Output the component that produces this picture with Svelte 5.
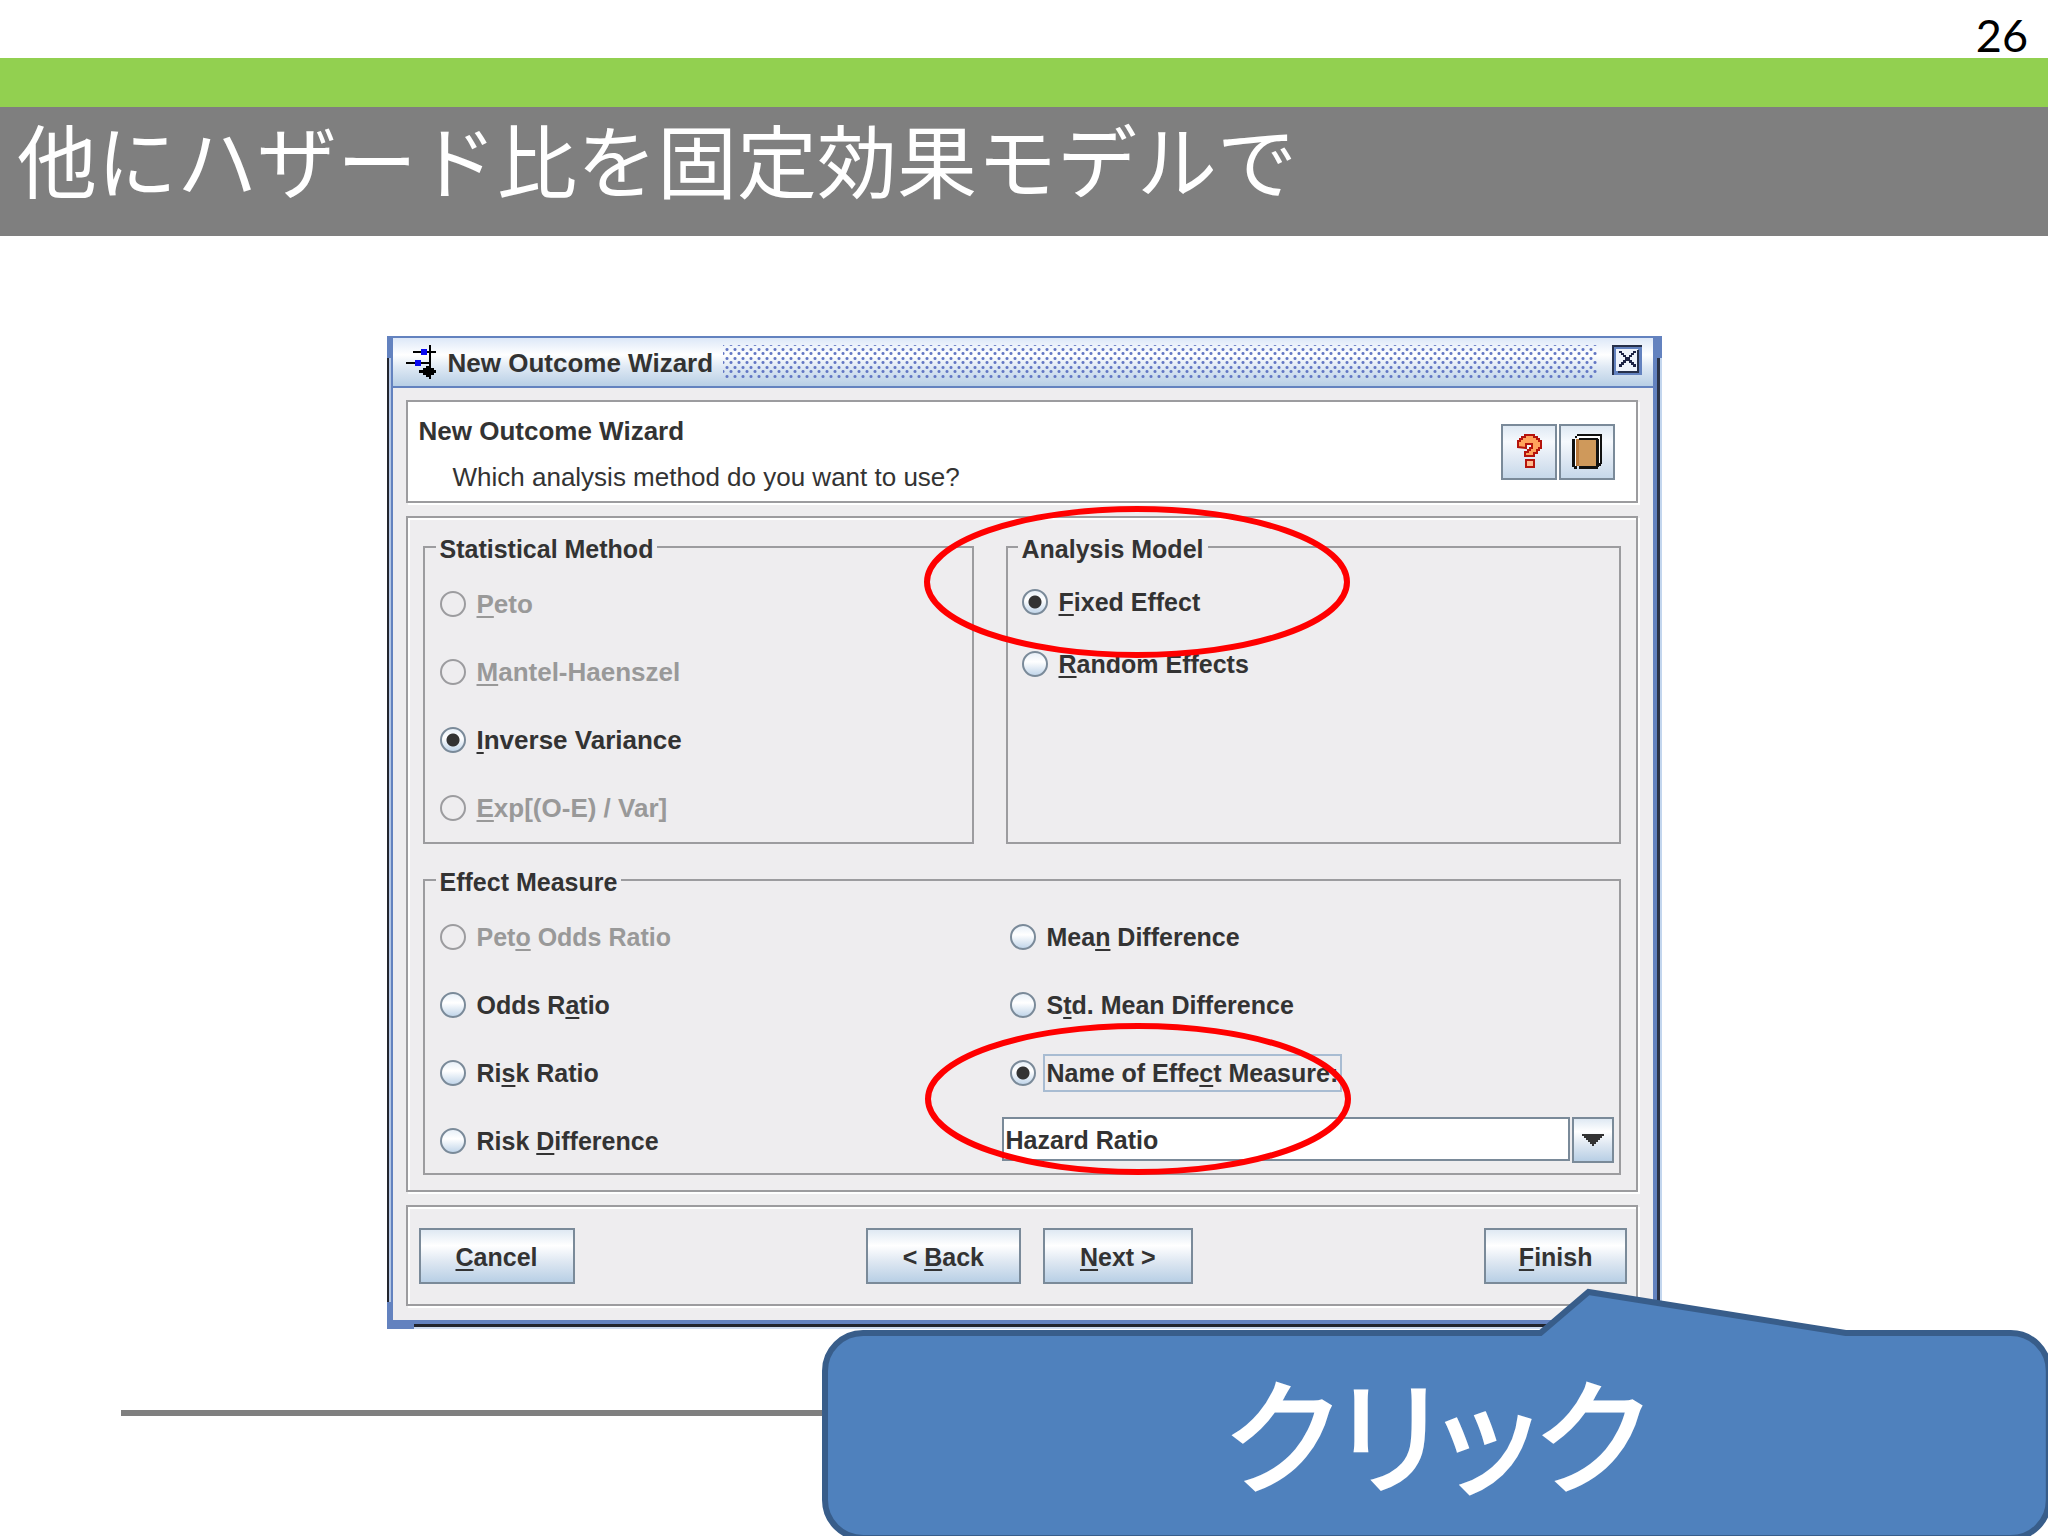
<script>
  // Each label is split around its keyboard mnemonic: [before, mnemonic, after].
  const methods = [
    { id: 'peto', label: ['', 'P', 'eto'], disabled: true },
    { id: 'mh', label: ['', 'M', 'antel-Haenszel'], disabled: true },
    { id: 'iv', label: ['', 'I', 'nverse Variance'] },
    { id: 'exp', label: ['', 'E', 'xp[(O-E) / Var]'], disabled: true }
  ];
  const models = [
    { id: 'fixed', label: ['', 'F', 'ixed Effect'] },
    { id: 'random', label: ['', 'R', 'andom Effects'] }
  ];
  const ratioMeasures = [
    { id: 'peto-or', label: ['Pet', 'o', ' Odds Ratio'], disabled: true },
    { id: 'or', label: ['Odds R', 'a', 'tio'] },
    { id: 'rr', label: ['Ri', 's', 'k Ratio'] },
    { id: 'rd', label: ['Risk ', 'D', 'ifference'] }
  ];
  const otherMeasures = [
    { id: 'md', label: ['Mea', 'n', ' Difference'] },
    { id: 'smd', label: ['S', 't', 'd. Mean Difference'] },
    { id: 'named', label: ['Name of Effe', 'c', 't Measure:'], focused: true }
  ];

  let method = $state('iv');
  let model = $state('fixed');
  let measure = $state('named');
  let measureName = $state('Hazard Ratio');
</script>

{#snippet caption(label)}{label[0]}<u>{label[1]}</u>{label[2]}{/snippet}

<main class="slide">
  <div class="page-number">26</div>
  <div class="accent"></div>
  <h1>他にハザード比を固定効果モデルで</h1>

  <section class="window" aria-label="New Outcome Wizard">
    <header class="titlebar">
      <svg class="app-icon" viewBox="0 0 32 34" aria-hidden="true">
        <path d="M24 0V34M7 7H30M0 18H23" fill="none" stroke="#000" stroke-width="2" />
        <path d="M15 4h6v6h-6zM9 15h6v6H9z" fill="#0808f0" />
        <path d="M13 25h4v-2h3v-2h5v2h3v2h2v3h-2v2h-3v2h-5v-2h-3v-2h-4z" fill="#000" />
      </svg>
      <span class="window-title">New Outcome Wizard</span>
      <span class="grip"></span>
      <button class="close" aria-label="Close">
        <svg viewBox="0 0 30 30" aria-hidden="true">
          <path d="M0 0h30v30H0z" fill="#6382bf" />
          <path d="M0 0h30v2H2v28H0z" fill="#26304a" />
          <path d="M4 4h22v22H4z" fill="#eef3fb" />
          <path d="M25 5h2v23H6v-2h19z" fill="#26304a" />
          <path d="M7 6h3v2h2v2h2v2h3v-2h2V8h2V6h3v2h-2v2h-2v2h-2v3h2v2h2v2h2v3h-3v-2h-2v-2h-2v-2h-3v2h-2v2h-2v2H7v-3h2v-2h2v-2h2v-3h-2v-2H9V8H7z" fill="#1c2344" />
        </svg>
      </button>
    </header>

    <div class="content">
      <div class="panel intro">
        <div class="intro-text">
          <h2>New Outcome Wizard</h2>
          <p>Which analysis method do you want to use?</p>
        </div>
        <div class="tools">
          <button class="metal tool" aria-label="Help">
            <svg viewBox="0 0 26 36" aria-hidden="true">
              <path
                d="M2 13V7h2V5h2V3h3V1h9v2h3v2h2v2h2v7h-2v2h-2v3h-3v3H9v-4h3v-2h2v-2h2v-4h-6v4z"
                fill="#ffa35c" stroke="#b5140c" stroke-width="2" />
              <path d="M10 26h8v7h-8z" fill="#ffb98c" stroke="#b5140c" stroke-width="2" />
            </svg>
          </button>
          <button class="metal tool" aria-label="Contents">
            <svg viewBox="0 0 30 36" aria-hidden="true">
              <path d="M5 1h24v29H5z" fill="#fff" />
              <path d="M2 6h23v26H2z" fill="#cf995b" />
              <path d="M2 5h2v27H2z" fill="#fff" />
              <path d="M4 5h3v27H4z" fill="#b9783a" />
              <path d="M5 0h25v30h-2V2H5z" fill="#111" />
              <path d="M3 2h2v2H3zM7 4h19v2H7zM0 5h3v28H0zM24 5h3v28h-3zM2 32h3v3H2zM7 32h19v3H7zM26 29h3v3h-3z" fill="#111" />
            </svg>
          </button>
        </div>
      </div>

      <div class="panel options">
        <div class="groups">
          <fieldset>
            <legend>Statistical Method</legend>
            <div class="rows method">
              {#each methods as m (m.id)}
                <label class="row">
                  <input type="radio" name="method" value={m.id} bind:group={method} disabled={m.disabled} />
                  <span>{@render caption(m.label)}</span>
                </label>
              {/each}
            </div>
          </fieldset>

          <fieldset class="model">
            <legend>Analysis Model</legend>
            <div class="rows">
              {#each models as m (m.id)}
                <label class="row">
                  <input type="radio" name="model" value={m.id} bind:group={model} />
                  <span>{@render caption(m.label)}</span>
                </label>
              {/each}
              <svg class="ring" viewBox="0 0 426 152" aria-hidden="true">
                <ellipse cx="213" cy="76" rx="210" ry="73" />
              </svg>
            </div>
          </fieldset>
        </div>

        <fieldset class="effect">
          <legend>Effect Measure</legend>
          <div class="measures">
            <div class="rows">
              {#each ratioMeasures as m (m.id)}
                <label class="row">
                  <input type="radio" name="measure" value={m.id} bind:group={measure} disabled={m.disabled} />
                  <span>{@render caption(m.label)}</span>
                </label>
              {/each}
            </div>
            <div class="rows other">
              {#each otherMeasures as m (m.id)}
                <label class="row">
                  <input type="radio" name="measure" value={m.id} bind:group={measure} />
                  <span class:focused={m.focused}>{@render caption(m.label)}</span>
                </label>
              {/each}
              <div class="combo">
                <input type="text" aria-label="Name of Effect Measure" bind:value={measureName} />
                <button class="metal" aria-label="Show effect measures">
                  <svg viewBox="0 0 22 12" aria-hidden="true">
                    <path d="M0 0h22v2h-2v2h-2v2h-2v2h-2v2h-2v2h-2v-2H8V8H6V6H4V4H2V2H0z" fill="#333" />
                  </svg>
                </button>
              </div>
              <svg class="ring" viewBox="0 0 426 152" aria-hidden="true">
                <ellipse cx="213" cy="76" rx="210" ry="73" />
              </svg>
            </div>
          </div>
        </fieldset>
      </div>

      <footer class="panel actions">
        <button class="metal"><span><u>C</u>ancel</span></button>
        <div class="steps">
          <button class="metal"><span>&lt; <u>B</u>ack</span></button>
          <button class="metal"><span><u>N</u>ext &gt;</span></button>
        </div>
        <button class="metal finish"><span><u>F</u>inish</span></button>
      </footer>
    </div>
  </section>

  <hr />

  <div class="callout">
    <svg viewBox="0 0 1228 250" preserveAspectRatio="none" aria-hidden="true">
      <path
        d="M44 47H721L769 6L1026 47H1191a38 38 0 0 1 38 38V214a38 38 0 0 1-38 38H44a38 38 0 0 1-38-38V85a38 38 0 0 1 38-38z"
        fill="#4f81bd" stroke="#385d8a" stroke-width="6" />
    </svg>
    <p>クリック</p>
  </div>
</main>

<style>
  :global(body) {
    margin: 0;
    background: #fff;
  }

  .slide {
    position: relative;
    box-sizing: border-box;
    min-height: 100vh;
    display: flex;
    flex-direction: column;
    overflow: hidden;
    background: #fff;
    color: #333;
    font-family: "Liberation Sans", Arial, sans-serif;
  }

  .page-number {
    height: 58px;
    box-sizing: border-box;
    padding: 5px 20px 0 0;
    text-align: right;
    color: #000;
    font: 45px/60px Lato, sans-serif;
  }

  .accent {
    height: 49px;
    background: #92d050;
  }

  h1 {
    margin: 0;
    padding: 0 17px 29px;
    background: #7f7f7f;
    color: #fff;
    font: 400 80px/100px "Noto Sans CJK JP", sans-serif;
  }

  /* Window frame: blue edges with a dark line and a light line outside it */
  .window {
    box-sizing: border-box;
    width: 100%;
    max-width: 1275px;
    margin: 100px auto 0;
    padding: 2px 9px 9px 6px;
    background:
      linear-gradient(90deg, #22252e 2px, #b4c6e4 2px) 0 22px / 4px calc(100% - 49px) no-repeat,
      linear-gradient(90deg, #2c3448 3px, #c3d6ee 3px) 100% 22px / 5px calc(100% - 22px) no-repeat,
      linear-gradient(180deg, #22252e 3px, #cfdcf0 3px) 100% 100% / calc(100% - 27px) 5px no-repeat,
      #6382bf;
  }

  .titlebar {
    display: flex;
    align-items: center;
    height: 48px;
    padding: 0 11px 0 13px;
    border-bottom: 2px solid #6382bf;
    background: linear-gradient(180deg, #dde8f8 0, #fff 35%, #dfe9f4 60%, #b8cfe5 100%);
  }

  .app-icon {
    width: 32px;
    height: 34px;
  }

  .window-title {
    margin-left: 10px;
    padding-top: 2px;
    font-size: 26px;
    line-height: 30px;
    font-weight: 700;
  }

  .grip {
    flex: 1;
    height: 34px;
    margin: 0 15px 0 10px;
    background:
      radial-gradient(circle, #6377c4 1px, transparent 2px) 0 0 / 8px 9px,
      radial-gradient(circle, #6377c4 1px, transparent 2px) 4px 4px / 8px 9px;
  }

  .close {
    width: 30px;
    height: 30px;
    margin-bottom: 4px;
    padding: 0;
    border: 0;
    background: none;
  }

  svg {
    display: block;
  }

  .content {
    display: flex;
    flex-direction: column;
    gap: 13px;
    padding: 12px 15px 14px 13px;
    background: #eeedef;
  }

  .panel,
  fieldset {
    border: 2px solid #9c9c9f;
  }

  .panel {
    box-shadow: 2px 2px 0 #fff, inset 2px 2px 0 #fff;
  }

  .intro {
    display: flex;
    align-items: center;
    justify-content: space-between;
    padding: 0 21px 0 11px;
    background: #fff;
  }

  .intro-text {
    padding: 6px 0 1px;
  }

  h2,
  .intro p {
    margin: 0;
    font-size: 26px;
    line-height: 46px;
  }

  .intro p {
    padding-left: 34px;
  }

  .tools {
    display: flex;
    gap: 2px;
  }

  .metal {
    display: flex;
    align-items: center;
    justify-content: center;
    box-sizing: border-box;
    height: 56px;
    padding: 0 35px;
    border: 2px solid #7a8a99;
    border-radius: 0;
    background: linear-gradient(180deg, #dfe9f3 0, #fff 30%, #dfe8f2 60%, #b8cfe5 100%);
    color: #333;
    font: 700 25px/30px "Liberation Sans", Arial, sans-serif;
    white-space: pre;
  }

  .metal span {
    padding-top: 2px;
  }

  .tool {
    width: 56px;
    padding: 0;
    background: linear-gradient(180deg, #dfe9f3 0, #f6f9fd 30%, #e2eaf4 60%, #c6d8ea 100%);
  }

  .tool svg {
    height: 36px;
  }

  .options {
    display: flex;
    flex-direction: column;
    gap: 22px;
    padding: 15px;
  }

  .groups {
    display: grid;
    grid-template-columns: 551fr 615fr;
    gap: 32px;
  }

  fieldset {
    min-width: 0;
    margin: 0;
    padding: 13px 6px 4px 15px;
  }

  .model {
    padding-top: 11px;
    padding-left: 14px;
  }

  .effect {
    padding-right: 5px;
    padding-bottom: 2px;
  }

  legend {
    margin-left: -4px;
    padding: 4px 4px 0;
    font-size: 25px;
    line-height: 24px;
    font-weight: 700;
  }

  .rows {
    position: relative;
    display: flex;
    flex-direction: column;
    align-items: flex-start;
    gap: 8px;
  }

  .row {
    display: flex;
    align-items: center;
    gap: 11px;
    height: 60px;
    font-size: 25px;
    line-height: 34px;
    font-weight: 700;
    white-space: pre;
  }

  .method .row {
    font-size: 26px;
  }

  .model .rows {
    gap: 2px;
  }

  u {
    text-decoration: underline 2px;
    text-underline-offset: 3px;
    text-decoration-skip-ink: none;
  }

  input[type="radio"] {
    appearance: none;
    box-sizing: border-box;
    width: 26px;
    height: 26px;
    margin: 0;
    border: 2px solid #7a8a99;
    border-radius: 50%;
    background: linear-gradient(180deg, #e8f0f8, #fff 40%, #c2d6ea);
  }

  input[type="radio"]:checked {
    background:
      radial-gradient(circle, #333 6px, transparent 7px),
      linear-gradient(180deg, #e8f0f8, #fff 40%, #c2d6ea);
  }

  input[type="radio"]:disabled {
    border-color: #9c9c9f;
    background: none;
  }

  input:disabled + span {
    color: #999;
  }

  .focused {
    padding: 0 2px;
    margin: 0 -2px;
    box-shadow: 0 0 0 2px #a8bcd2;
  }

  .measures {
    display: grid;
    grid-template-columns: 562fr 612fr;
  }

  .other .row {
    padding-left: 8px;
  }

  .combo {
    display: flex;
    align-self: stretch;
    align-items: flex-start;
    gap: 2px;
    padding-top: 6px;
  }

  .combo input {
    flex: 1;
    min-width: 0;
    box-sizing: border-box;
    height: 44px;
    padding: 2px 2px 0;
    border: 2px solid #7a8a99;
    background: #fff;
    color: #333;
    font: 700 25px/30px "Liberation Sans", Arial, sans-serif;
  }

  .combo .metal {
    width: 42px;
    height: 46px;
    padding: 0;
  }

  .combo svg {
    width: 22px;
  }

  .actions {
    display: flex;
    align-items: center;
    padding: 21px 8px 20px 11px;
  }

  .steps {
    display: flex;
    gap: 22px;
    margin: 0 auto;
  }

  .finish {
    padding: 0 33px;
  }

  /* Emphasis rings laid over the form */
  .ring {
    position: absolute;
    top: -66px;
    left: -98px;
    width: 426px;
    height: 152px;
    overflow: visible;
    pointer-events: none;
  }

  .other .ring {
    top: 116px;
    left: -77px;
  }

  .ring ellipse {
    fill: none;
    stroke: #f00;
    stroke-width: 6;
  }

  hr {
    box-sizing: border-box;
    width: auto;
    height: 6px;
    margin: 81px 121px 0;
    border: 0;
    background: #7f7f7f;
  }

  .callout {
    position: absolute;
    right: 0;
    bottom: 0;
    width: 60%;
    height: 250px;
  }

  .callout svg {
    width: 100%;
    height: 100%;
  }

  .callout p {
    position: absolute;
    inset: 38px 0 0 6px;
    display: flex;
    align-items: center;
    justify-content: center;
    margin: 0;
    color: #fff;
    font: 400 124px/150px "Noto Sans CJK JP", sans-serif;
    font-feature-settings: "palt";
    -webkit-text-stroke: 3px #fff;
  }
</style>
